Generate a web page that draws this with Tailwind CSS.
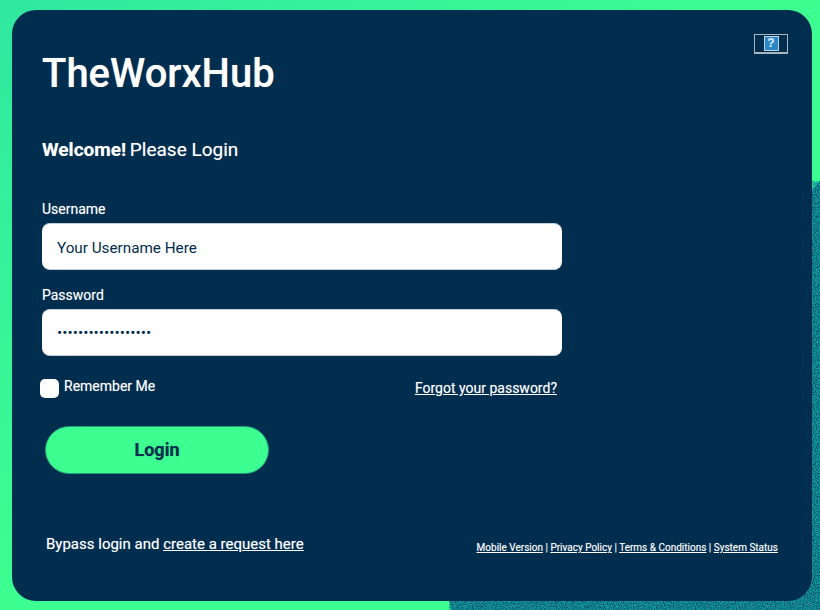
<!DOCTYPE html>
<html lang="en">
<head>
  <meta charset="UTF-8" />
  <title>TheWorxHub Login</title>
  <script src="https://cdn.jsdelivr.net/npm/@tailwindcss/browser@4"></script>
</head>
<body class="relative w-[820px] h-[610px] overflow-hidden bg-[#3dfe90] font-['Roboto',sans-serif]">

  <!-- Background -->
  <div class="absolute inset-0 bg-linear-to-br from-[#30e8a0] to-[#3dfe90] to-50%"></div>
  <svg class="absolute inset-0" width="820" height="610" aria-hidden="true">
    <filter id="grain" x="0" y="0" width="100%" height="100%" color-interpolation-filters="sRGB">
      <feTurbulence type="fractalNoise" baseFrequency="0.9" numOctaves="2" seed="4" />
      <feColorMatrix values="0 0 0 0 0.07  0 0 0 0 0.6  0 0 0 0 0.62  2.6 0 0 0 -0.6" />
    </filter>
    <polygon points="452,610 449,600 820,181 820,610" fill="#06465f" />
    <polygon points="452,610 449,600 820,181 820,610" filter="url(#grain)" />
  </svg>

  <!-- Card -->
  <main class="absolute left-3 top-2.5 w-[800px] h-[591px] rounded-[24px] bg-[#012d4e] text-white pl-[30px] [text-shadow:0_0_1px_rgba(255,255,255,0.45)]">
    <a href="#" class="absolute left-[742px] top-6 w-[34px] h-5 border border-[#a9b5bf] border-b-2 flex items-start justify-center">
      <span class="mt-px w-[15px] h-[15px] bg-[#2a86c4] border border-[#b9d8ee] text-[#cfe6f6] text-[12px] leading-[13px] font-bold text-center font-['Liberation_Sans',sans-serif]">?</span>
    </a>

    <h1 class="pt-[39px] text-[40px] leading-[50px] font-medium text-white">TheWorxHub</h1>
    <h2 class="mt-[39px] text-[19px] leading-[24px]"><strong class="font-bold -mr-px">Welcome!</strong> Please Login</h2>

    <form class="mt-[37px] w-[520px]" onsubmit="return false">
      <label for="username" class="block text-[14px] leading-[20px]">Username</label>
      <input id="username" type="text" placeholder="Your Username Here"
             class="mt-1 block w-full h-[47px] rounded-lg bg-white border-y border-[#c3ced7] px-[15px] pt-0.5 text-[15.25px] text-[#012d4e] placeholder-[#012d4e]" />

      <label for="password" class="mt-[15px] block text-[14px] leading-[20px]">Password</label>
      <input id="password" type="password" value="ThisIsAPassword123"
             class="mt-1 block w-full h-[47px] rounded-lg bg-white border-y border-[#c3ced7] px-[15px] text-[15.5px] text-[#012d4e]" />

      <div class="mt-[22px] flex items-center justify-between pr-[5px]">
        <label class="-ml-0.5 flex items-center gap-[5px] text-[14px] leading-[20px]">
          <span class="w-[19px] h-[19px] rounded-[5px] bg-white"></span>
          <span class="-mt-1">Remember Me</span>
        </label>
        <a href="#" class="text-[14px] leading-[20px] underline">Forgot your password?</a>
      </div>

      <button class="mt-[28px] ml-[3px] block w-[224px] h-[48px] rounded-full bg-[#3dfe90] border border-[#1f9c7c] text-[#012d4e] text-[18px] font-bold pb-px [text-shadow:0_0_1px_rgba(1,45,78,0.5)]">Login</button>
    </form>

    <div class="mt-[60px] ml-1 flex items-start justify-between pr-[34px]">
      <p class="text-[15px] leading-[20px]">Bypass login and <a href="#" class="underline">create a request here</a></p>
      <p class="mt-[7px] text-[10px] leading-[14px]">
        <a href="#" class="underline">Mobile Version</a> | <a href="#" class="underline">Privacy Policy</a> | <a href="#" class="underline">Terms &amp; Conditions</a> | <a href="#" class="underline">System Status</a>
      </p>
    </div>
  </main>
</body>
</html>
